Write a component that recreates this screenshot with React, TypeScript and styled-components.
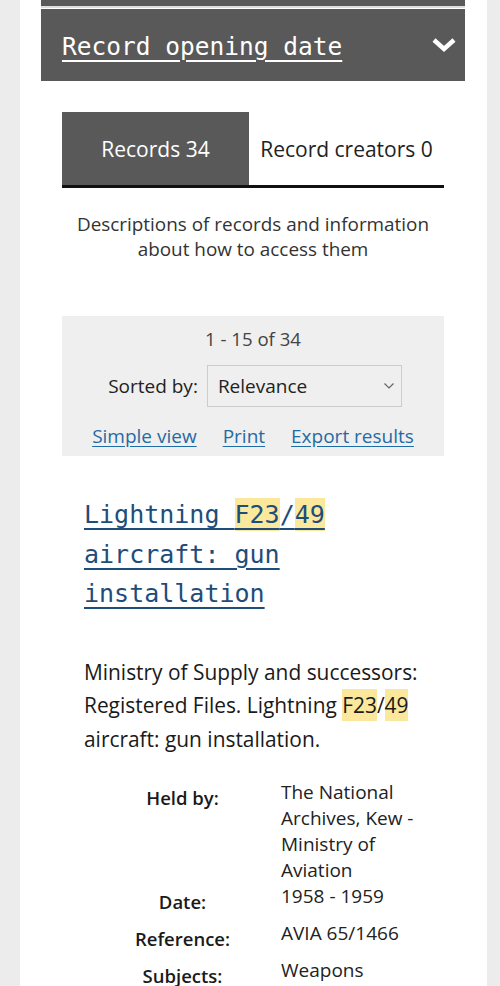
import React from 'react'
import styled, { createGlobalStyle } from 'styled-components'

const GlobalStyle = createGlobalStyle`
  body {
    margin: 0;
    background: #ececec;
    font-family: 'Open Sans', 'Liberation Sans', sans-serif;
  }
`

const details = [
  { label: 'Held by:', value: 'The National Archives, Kew - Ministry of Aviation' },
  { label: 'Date:', value: '1958 - 1959' },
  { label: 'Reference:', value: 'AVIA 65/1466' },
  { label: 'Subjects:', value: 'Weapons' },
]

const App: React.FC = () => {
  return (
    <>
      <GlobalStyle />
      <Page>
        <PrevPanel />
        <Accordion>
          <AccordionTitle href="#">Record opening date</AccordionTitle>
          <svg width="26" height="18" viewBox="0 0 26 18">
            <polyline points="3,4 13,13 23,4" fill="none" stroke="#ffffff" strokeWidth="4.5" />
          </svg>
        </Accordion>

        <Inner>
          <Tabs>
            <Tab active>Records 34</Tab>
            <Tab>Record creators 0</Tab>
          </Tabs>
          <TabIntro>
            Descriptions of records and information
            <br />
            about how to access them
          </TabIntro>

          <ResultsBar>
            <Count>1 - 15 of 34</Count>
            <SortRow>
              <SortLabel>Sorted by:</SortLabel>
              <SortSelect>
                <span>Relevance</span>
                <svg width="12" height="8" viewBox="0 0 12 8">
                  <polyline points="1.5,1.5 6,6 10.5,1.5" fill="none" stroke="#666" strokeWidth="1.2" />
                </svg>
              </SortSelect>
            </SortRow>
            <BarLinks>
              <BarLink href="#">Simple view</BarLink>
              <BarLink href="#">Print</BarLink>
              <BarLink href="#">Export results</BarLink>
            </BarLinks>
          </ResultsBar>

          <Result>
            <ResultTitle href="#">
              Lightning <Mark>F23</Mark>/<Mark>49</Mark> aircraft: gun installation
            </ResultTitle>
            <ResultText>
              Ministry of Supply and successors: Registered Files. Lightning <Mark>F23</Mark>/<Mark>49</Mark>{' '}
              aircraft: gun installation.
            </ResultText>
            <DetailList>
              {details.map(d => (
                <React.Fragment key={d.label}>
                  <DetailLabel>{d.label}</DetailLabel>
                  <DetailValue>{d.value}</DetailValue>
                </React.Fragment>
              ))}
            </DetailList>
          </Result>
        </Inner>
      </Page>
    </>
  )
}

export default App

const Page = styled.div`
  margin-left: 20px;
  width: 467px;
  min-height: 986px;
  background: #ffffff;
  padding: 0 22px 0 21px;
  box-sizing: border-box;
`

const PrevPanel = styled.div`
  height: 6px;
  background: #595959;
  border-bottom: 2px solid #dedede;
  margin-bottom: 1px;
`

const Accordion = styled.div`
  height: 72px;
  background: #595959;
  display: flex;
  align-items: center;
  justify-content: space-between;
  padding: 0 8px 0 21px;
  box-sizing: border-box;
`

const AccordionTitle = styled.a`
  font-family: 'DejaVu Sans Mono', 'Liberation Mono', monospace;
  font-size: 24.5px;
  color: #ffffff;
  text-decoration: underline;
  text-decoration-thickness: 2px;
  text-underline-offset: 5px;
  margin-top: 2px;
`

const Inner = styled.div`
  padding: 31px 21px 0;
`

const Tabs = styled.div`
  display: flex;
  border-bottom: 3px solid #111111;
`

const Tab = styled.div<{ active?: boolean }>`
  height: 73px;
  display: flex;
  align-items: center;
  justify-content: center;
  font-size: 21px;
  width: ${p => (p.active ? '187px' : 'auto')};
  flex: ${p => (p.active ? 'none' : '1')};
  background: ${p => (p.active ? '#595959' : '#ffffff')};
  color: ${p => (p.active ? '#ffffff' : '#222222')};
`

const TabIntro = styled.p`
  margin: 24px 0 0;
  text-align: center;
  font-size: 18.9px;
  line-height: 25px;
  color: #333333;
`

const ResultsBar = styled.div`
  margin-top: 54px;
  background: #efefef;
  height: 140px;
  box-sizing: border-box;
  padding-top: 11px;
  display: flex;
  flex-direction: column;
  align-items: center;
`

const Count = styled.div`
  font-size: 18.6px;
  line-height: 24px;
  color: #444444;
`

const SortRow = styled.div`
  display: flex;
  align-items: center;
  gap: 9px;
  margin-top: 14px;
  padding-left: 4px;
`

const SortLabel = styled.span`
  font-size: 19px;
  color: #222222;
`

const SortSelect = styled.div`
  width: 195px;
  height: 42px;
  box-sizing: border-box;
  border: 1px solid #cccccc;
  background: #efefef;
  display: flex;
  align-items: center;
  justify-content: space-between;
  padding: 0 6px 0 10px;
  font-size: 19px;
  color: #222222;
`

const BarLinks = styled.div`
  display: flex;
  gap: 26px;
  margin-top: 16px;
`

const BarLink = styled.a`
  font-size: 19px;
  color: #1f6ba5;
  text-decoration: underline;
  text-underline-offset: 3px;
`

const Result = styled.div`
  padding: 39px 22px 0;
`

const ResultTitle = styled.a`
  display: block;
  font-family: 'DejaVu Sans Mono', 'Liberation Mono', monospace;
  font-size: 25px;
  line-height: 39.5px;
  color: #1d4d7a;
  text-decoration: underline;
  text-decoration-thickness: 2px;
  text-underline-offset: 5px;
`

const Mark = styled.mark`
  background: #fbe89c;
  color: inherit;
  padding: 2px 0;
`

const ResultText = styled.p`
  margin: 42px 0 0;
  font-size: 20.9px;
  line-height: 33.5px;
  color: #1a1a1a;
`

const DetailList = styled.div`
  margin-top: 23px;
  display: grid;
  grid-template-columns: 197px 1fr;
`

const DetailLabel = styled.div`
  font-size: 18.5px;
  line-height: 26px;
  font-weight: 600;
  text-align: center;
  color: #1a1a1a;
  padding: 6px 0 5px;
`

const DetailValue = styled.div`
  font-size: 19px;
  line-height: 26px;
  color: #222222;
`
